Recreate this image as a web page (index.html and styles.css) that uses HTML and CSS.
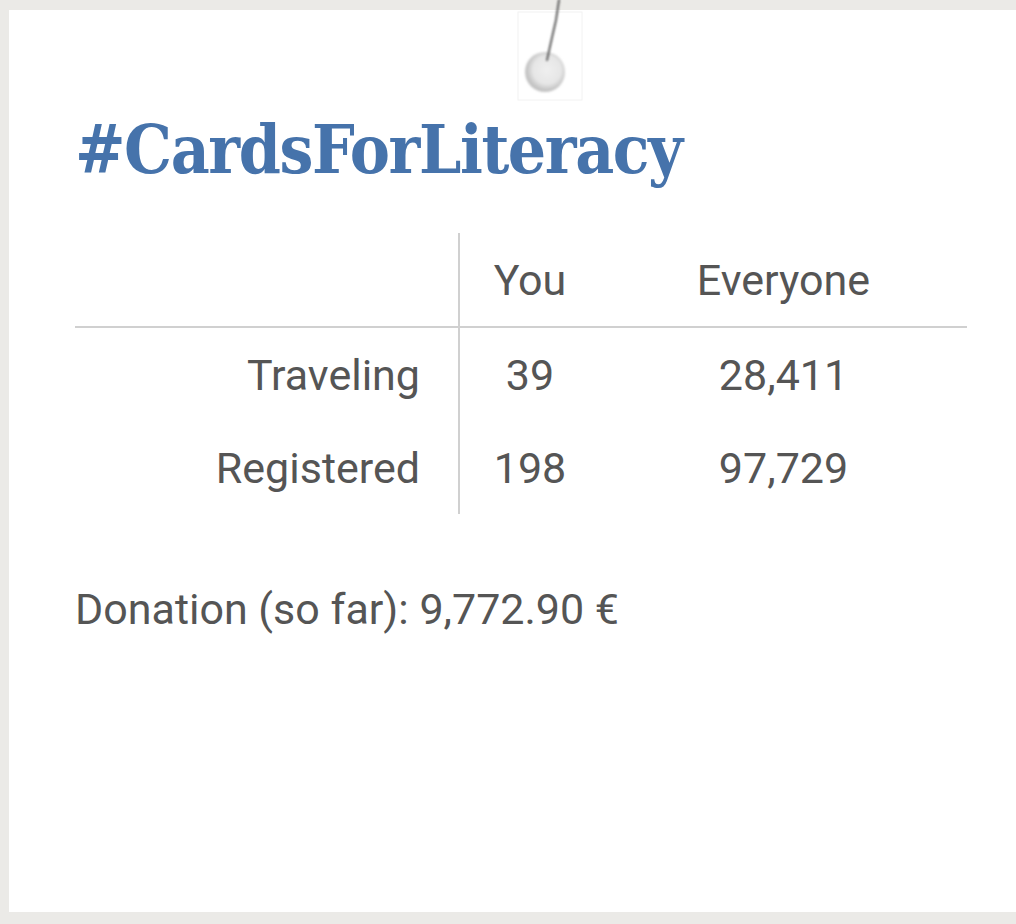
FILE: index.html
```html
<!DOCTYPE html>
<html lang="en">
<head>
<meta charset="utf-8">
<title>#CardsForLiteracy</title>
<link rel="stylesheet" href="styles.css">
</head>
<body>
<div class="card">
  <div class="pin">
    <svg width="70" height="102" viewBox="0 0 70 102">
      <defs>
        <radialGradient id="head" cx="55%" cy="45%" r="50%">
          <stop offset="0%" stop-color="#efefef"/>
          <stop offset="70%" stop-color="#e6e6e6"/>
          <stop offset="100%" stop-color="#c4c4c4"/>
        </radialGradient>
        <filter id="blur" x="-20%" y="-20%" width="140%" height="140%">
          <feGaussianBlur stdDeviation="1.1"/>
        </filter>
      </defs>
      <rect x="3" y="12" width="64" height="88" fill="#fff" stroke="#f2f2f2" stroke-width="1"/>
      <circle cx="30" cy="72" r="20" fill="url(#head)" filter="url(#blur)"/>
      <path d="M44 0 L41 20 L36 42 L32 60" fill="none" stroke="#5e5e5e" stroke-width="2" stroke-linecap="round" filter="url(#blur)"/>
    </svg>
  </div>
  <h1 class="title">#CardsForLiteracy</h1>
  <table class="stats">
    <thead>
      <tr>
        <th class="label"></th>
        <th class="you">You</th>
        <th class="all">Everyone</th>
      </tr>
    </thead>
    <tbody>
      <tr>
        <td class="label">Traveling</td>
        <td class="you">39</td>
        <td class="all">28,411</td>
      </tr>
      <tr>
        <td class="label">Registered</td>
        <td class="you">198</td>
        <td class="all">97,729</td>
      </tr>
    </tbody>
  </table>
  <p class="donation">Donation (so far): 9,772.90 €</p>
</div>
</body>
</html>
```
FILE: styles.css
```css
html, body {
  margin: 0;
  padding: 0;
  background: #ebeae7;
  overflow: hidden;
}
.card {
  position: relative;
  margin: 10px 0 0 9px;
  height: 902px;
  background: #fff;
  padding: 0 49px 0 66px;
  box-sizing: border-box;
  font-family: Roboto, "Liberation Sans", sans-serif;
  color: #555;
}
.pin {
  position: absolute;
  left: 506px;
  top: -10px;
}
.pin svg { display: block; }
.title {
  margin: 0;
  padding-top: 95px;
  font-family: "DejaVu Serif", serif;
  font-stretch: condensed;
  font-weight: bold;
  font-size: 67px;
  letter-spacing: -1.4px;
  line-height: 90px;
  color: #4673ab;
}
.stats {
  margin-top: 38px;
  width: 892px;
  table-layout: fixed;
  border-collapse: collapse;
  font-size: 43px;
}
.stats th, .stats td {
  height: 93px;
  padding: 0;
  font-weight: normal;
  text-align: center;
  vertical-align: middle;
}
.stats .label {
  width: 345px;
  text-align: right;
  padding-right: 38px;
  border-right: 2px solid #d0d0d0;
}
.stats .you { width: 140px; }
.stats thead th { border-bottom: 2px solid #d0d0d0; }
.donation {
  margin: 70px 0 0;
  font-size: 43px;
  line-height: 1.2;
}
```
